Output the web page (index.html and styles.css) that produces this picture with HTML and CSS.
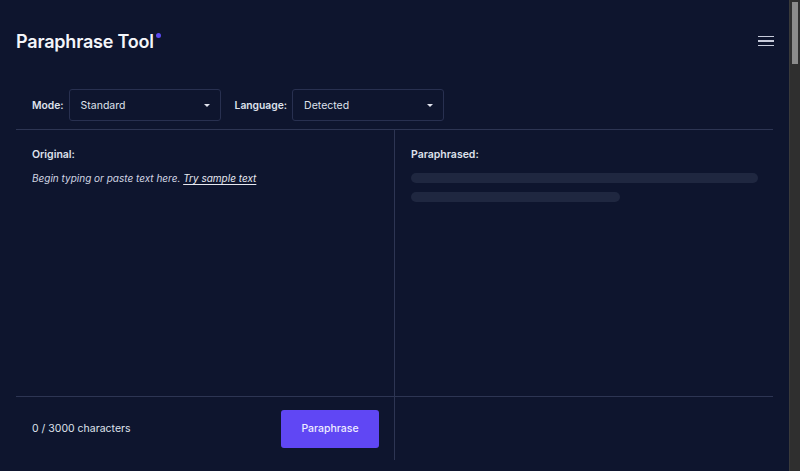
FILE: index.html
```html
<!DOCTYPE html>
<html lang="en">
<head>
<meta charset="utf-8">
<title>Paraphrase Tool</title>
<link rel="stylesheet" href="styles.css">
</head>
<body>
<div class="page">
  <header class="header">
    <h1 class="title">Paraphrase Tool<span class="dot"></span></h1>
    <button class="menu" aria-label="Menu">
      <span></span><span></span><span></span>
    </button>
  </header>

  <div class="controls">
    <label class="ctl-label">Mode:</label>
    <div class="select">
      <span>Standard</span>
      <span class="caret"></span>
    </div>
    <label class="ctl-label">Language:</label>
    <div class="select">
      <span>Detected</span>
      <span class="caret"></span>
    </div>
  </div>

  <main class="panels">
    <section class="panel panel-left">
      <div class="panel-body">
        <div class="panel-title">Original:</div>
        <p class="placeholder">Begin typing or paste text here. <a class="sample">Try sample text</a></p>
      </div>
      <div class="panel-foot">
        <span class="count">0 / 3000 characters</span>
        <button class="btn">Paraphrase</button>
      </div>
    </section>
    <section class="panel panel-right">
      <div class="panel-body">
        <div class="panel-title">Paraphrased:</div>
        <div class="skeleton long"></div>
        <div class="skeleton short"></div>
      </div>
      <div class="panel-foot"></div>
    </section>
  </main>
</div>
<div class="scrollbar"><div class="thumb"></div></div>
</body>
</html>
```

FILE: styles.css
```css
* { box-sizing: border-box; }

html {
  background: #0e152e;
}

body {
  margin: 0;
  background: #0e152e;
  color: #e6e8f0;
  font-family: Inter, "Noto Sans", sans-serif;
}

.page {
  width: 789px;
  padding: 0 16px;
}

.scrollbar {
  position: fixed;
  top: 0;
  right: 0;
  width: 11px;
  height: 100%;
  background: #2f2f2f;
  border-left: 1px solid #3a3a3a;
}
.scrollbar .thumb {
  margin: 2px 0 0 2px;
  width: 6px;
  height: 62px;
  background: #8b8b8b;
}

.header {
  display: flex;
  align-items: center;
  justify-content: space-between;
  height: 82px;
}

.title {
  margin: 0;
  font-size: 18px;
  font-weight: 600;
  letter-spacing: -0.2px;
  color: #f4f5fa;
  position: relative;
  padding-top: 1px;
}

.dot {
  position: absolute;
  top: 3px;
  right: -7px;
  width: 5px;
  height: 5px;
  border-radius: 50%;
  background: #5b4af0;
}

.menu {
  display: flex;
  flex-direction: column;
  gap: 3px;
  width: 16px;
  padding: 0;
  margin-right: -1px;
  background: none;
  border: 0;
}
.menu span {
  display: block;
  height: 1.5px;
  background: #c7cbdb;
}

.controls {
  display: flex;
  align-items: center;
  padding: 7px 16px 8px;
  border-bottom: 1px solid #2d3553;
}

.ctl-label {
  font-size: 10.3px;
  font-weight: 600;
  color: #dfe2ec;
  margin-right: 5px;
}

.select {
  display: flex;
  align-items: center;
  justify-content: space-between;
  width: 152px;
  height: 32px;
  padding: 0 12px 0 11px;
  border: 1px solid #283050;
  border-radius: 3px;
  font-size: 10.5px;
  color: #dfe2ec;
  margin-right: 14px;
}

.caret {
  width: 0;
  height: 0;
  border-left: 3.5px solid transparent;
  border-right: 3.5px solid transparent;
  border-top: 3.5px solid #e2e4ee;
  margin-right: -2px;
}

.panels {
  display: flex;
  height: 330px;
}

.panel {
  display: flex;
  flex-direction: column;
}

.panel-left {
  width: 379px;
  border-right: 1px solid #2d3553;
}

.panel-right {
  flex: 1;
}

.panel-body {
  flex: 1;
  padding: 18px 16px;
}

.panel-foot {
  height: 64px;
  border-top: 1px solid #2d3553;
  display: flex;
  align-items: center;
  justify-content: space-between;
  padding: 0 16px;
}

.panel-title {
  font-size: 10.5px;
  font-weight: 600;
  color: #dfe2ec;
}

.placeholder {
  margin: 11px 0 0;
  font-size: 10px;
  font-style: italic;
  color: #d2d6e3;
}

.sample {
  color: #e6e8f0;
  text-decoration: underline;
  text-underline-offset: 2px;
}

.count {
  font-size: 10.5px;
  color: #dfe2ec;
}

.btn {
  width: 98px;
  height: 38px;
  border: 0;
  border-radius: 3px;
  background: #6047f4;
  color: #eeecff;
  font-family: Inter, sans-serif;
  font-size: 10.5px;
  font-weight: 500;
  margin-right: -1px;
}

.panel-right .panel-body {
  padding-right: 15px;
}

.skeleton {
  height: 10px;
  border-radius: 5px;
  background: #1f2740;
}
.skeleton.long {
  margin-top: 12px;
  width: 347px;
}
.skeleton.short {
  margin-top: 9px;
  width: 209px;
}
```
